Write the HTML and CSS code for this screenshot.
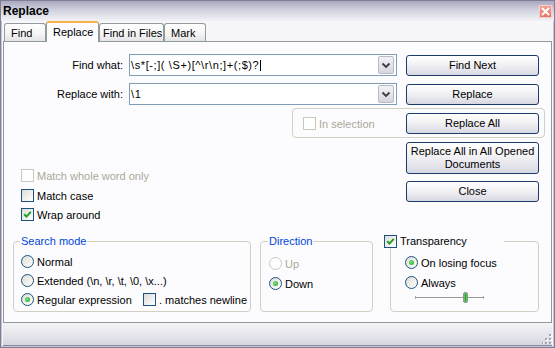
FILE: index.html
```html
<!DOCTYPE html>
<html lang="en">
<head>
    <meta charset="UTF-8">
    <title>Replace</title>
    <link rel="stylesheet" href="styles.css">
</head>
<body>
    <div class="window">
        <div class="titlebar">
            <span class="title">Replace</span>
            <span class="close-btn">
                <svg width="11" height="11" viewBox="0 0 11 11"><path d="M2.5 2.5 L8.5 8.5 M8.5 2.5 L2.5 8.5" stroke="#fff" stroke-width="2" stroke-linecap="round"/></svg>
            </span>
        </div>

        <div class="body">
            <div class="tabs">
                <div class="tab tab-find">Find</div>
                <div class="tab tab-replace active">Replace</div>
                <div class="tab tab-files">Find in Files</div>
                <div class="tab tab-mark">Mark</div>
            </div>

            <div class="panel">
                <div class="row row-find">
                    <span class="field-label">Find what:</span>
                    <div class="combo">
                        <span class="combo-text regex-text">\s*[-;]( \S+)[^\r\n;]+(;$)?<span class="caret"></span></span>
                        <span class="drop"><svg width="14" height="16" viewBox="0 0 14 16"><path d="M3.5 6.5 L7 10 L10.5 6.5" fill="none" stroke="#3c3c3c" stroke-width="1.8"/></svg></span>
                    </div>
                    <button class="btn">Find Next</button>
                </div>

                <div class="row row-replace">
                    <span class="field-label">Replace with:</span>
                    <div class="combo">
                        <span class="combo-text regex-text">\1</span>
                        <span class="drop"><svg width="14" height="16" viewBox="0 0 14 16"><path d="M3.5 6.5 L7 10 L10.5 6.5" fill="none" stroke="#3c3c3c" stroke-width="1.8"/></svg></span>
                    </div>
                    <button class="btn">Replace</button>
                </div>

                <div class="sel-group">
                    <div class="check sel-check">
                        <span class="box disabled"></span>
                        <span class="muted">In selection</span>
                    </div>
                    <button class="btn">Replace All</button>
                </div>

                <div class="row row-lower">
                    <div class="checks">
                        <div class="check">
                            <span class="box disabled"></span>
                            <span class="muted">Match whole word only</span>
                        </div>
                        <div class="check">
                            <span class="box"></span>
                            <span>Match case</span>
                        </div>
                        <div class="check">
                            <span class="box"><svg width="9" height="9" viewBox="0 0 9 9"><path d="M1.2 4.2 L3.5 6.6 L7.8 1.8" fill="none" stroke="#21a121" stroke-width="2"/></svg></span>
                            <span>Wrap around</span>
                        </div>
                    </div>
                    <div class="side-buttons">
                        <button class="btn btn-tall">Replace All in All Opened Documents</button>
                        <button class="btn">Close</button>
                    </div>
                </div>

                <div class="groups">
                    <fieldset class="group search-group">
                        <legend>Search mode</legend>
                        <div class="group-body">
                            <div class="radio">
                                <span class="box round"></span>
                                <span>Normal</span>
                            </div>
                            <div class="radio">
                                <span class="box round"></span>
                                <span>Extended (\n, \r, \t, \0, \x...)</span>
                            </div>
                            <div class="radio-line">
                                <div class="radio regex">
                                    <span class="box round"><span class="dot"></span></span>
                                    <span>Regular expression</span>
                                </div>
                                <div class="check">
                                    <span class="box"></span>
                                    <span>. matches newline</span>
                                </div>
                            </div>
                        </div>
                    </fieldset>

                    <fieldset class="group direction-group">
                        <legend>Direction</legend>
                        <div class="group-body">
                            <div class="radio">
                                <span class="box round disabled"></span>
                                <span class="muted">Up</span>
                            </div>
                            <div class="radio">
                                <span class="box round"><span class="dot"></span></span>
                                <span>Down</span>
                            </div>
                        </div>
                    </fieldset>

                    <fieldset class="group trans-group">
                        <legend>
                            <span class="check">
                                <span class="box"><svg width="9" height="9" viewBox="0 0 9 9"><path d="M1.2 4.2 L3.5 6.6 L7.8 1.8" fill="none" stroke="#21a121" stroke-width="2"/></svg></span>
                                <span>Transparency</span>
                            </span>
                        </legend>
                        <div class="group-body">
                            <div class="radio">
                                <span class="box round"><span class="dot"></span></span>
                                <span>On losing focus</span>
                            </div>
                            <div class="radio">
                                <span class="box round"></span>
                                <span>Always</span>
                            </div>
                            <div class="slider">
                                <svg width="70" height="11" viewBox="0 0 70 11">
                                    <path d="M0.5 4 V7 M68.5 4 V7" stroke="#b4b4b4"/>
                                    <path d="M0 5.5 H69" stroke="#9a9a9a"/>
                                    <path d="M1 6.5 H68" stroke="#ffffff"/>
                                    <rect x="48.5" y="0.5" width="4" height="10" rx="1.5" fill="#5ec45e" stroke="#8a9a92"/>
                                    <path d="M50.5 2 V9" stroke="#2f9e2f"/>
                                </svg>
                            </div>
                        </div>
                    </fieldset>
                </div>
            </div>

            <div class="statusbar">
                <svg class="grip" width="10" height="10" viewBox="0 0 10 10">
                    <g fill="#ffffff">
                        <rect x="8" y="1" width="2" height="2"/><rect x="8" y="5" width="2" height="2"/><rect x="4" y="5" width="2" height="2"/>
                        <rect x="8" y="9" width="2" height="1"/><rect x="4" y="9" width="2" height="1"/><rect x="0" y="9" width="2" height="1"/>
                    </g>
                    <g fill="#a4a4b4">
                        <rect x="7" y="0" width="2" height="2"/><rect x="7" y="4" width="2" height="2"/><rect x="3" y="4" width="2" height="2"/>
                        <rect x="7" y="8" width="2" height="2"/><rect x="3" y="8" width="2" height="2"/><rect x="-1" y="8" width="2" height="2"/>
                    </g>
                </svg>
            </div>
        </div>
    </div>
</body>
</html>
```

FILE: styles.css
```css
body {
    margin: 0;
    font-family: "Liberation Sans", Arial, sans-serif;
    font-size: 11px;
    color: #000;
}

.window {
    width: 555px;
    height: 348px;
    box-sizing: border-box;
    border: 1px solid #7e7e96;
    background: #c4c4d2;
    display: flex;
    flex-direction: column;
}

.titlebar {
    height: 20px;
    flex: none;
    display: flex;
    align-items: center;
    justify-content: space-between;
    padding: 0 2px;
    background: linear-gradient(#a8a8c0, #d2d2de 45%, #f2f2f6);
}

.title {
    font-size: 12px;
    font-weight: bold;
}

.close-btn {
    width: 13px;
    height: 13px;
    box-sizing: border-box;
    border: 1px solid #f6cfc8;
    background: linear-gradient(#f2a096, #e27468);
    display: flex;
    align-items: center;
    justify-content: center;
}

.body {
    flex: 1;
    display: flex;
    flex-direction: column;
    margin: 0 1px 1px;
    padding: 0 1px;
    background: #f7f7fa;
}

/* tabs */
.tabs {
    display: flex;
    align-items: flex-end;
    height: 21px;
    padding-left: 1px;
    margin-bottom: -1px;
}

.tab {
    height: 18px;
    margin-bottom: 1px;
    box-sizing: border-box;
    border: 1px solid #919b9c;
    border-bottom: none;
    border-radius: 3px 3px 0 0;
    background: linear-gradient(#ffffff, #f4f4f4 60%, #e4e4e8);
    padding: 1px 0 0 6px;
    line-height: 16px;
    white-space: nowrap;
    overflow: hidden;
}

.tab-find { width: 42px; }
.tab-replace { width: 53px; }
.tab-files { width: 65px; padding-left: 3px; }
.tab-mark { width: 42px; }

.tab.active {
    height: 21px;
    margin-bottom: 0;
    background: #fcfcfe;
    border-top: 2px solid #f5b347;
    padding-top: 1px;
    position: relative;
    z-index: 1;
}

.panel {
    flex: none;
    height: 282px;
    box-sizing: border-box;
    border: 1px solid #919b9c;
    background: #fcfcfe;
}

/* top rows */
.row {
    display: flex;
    align-items: flex-start;
}

.row-find { margin-top: 12px; }
.row-replace { margin-top: 7px; }

.field-label {
    width: 119px;
    text-align: right;
    line-height: 22px;
}

.combo {
    margin-left: 6px;
    width: 268px;
    height: 22px;
    box-sizing: border-box;
    border: 1px solid #7f9db9;
    background: #fff;
    display: flex;
    align-items: center;
}

.combo-text {
    flex: 1;
    padding-left: 1px;
    white-space: pre;
}

.regex-text {
    letter-spacing: 0.6px;
}

.caret {
    display: inline-block;
    width: 1px;
    height: 11px;
    background: #000;
    vertical-align: -2px;
    margin-left: 1px;
}

.drop {
    width: 16px;
    height: 18px;
    margin-right: 2px;
    box-sizing: border-box;
    border: 1px solid #b9b9cc;
    border-radius: 2px;
    background: linear-gradient(#f2f2f6, #d6d6e2);
    display: flex;
    align-items: center;
    justify-content: center;
}

.btn {
    width: 133px;
    height: 21px;
    margin: 1px 0 0 9px;
    padding: 0;
    box-sizing: border-box;
    border: 1px solid #1c3a6c;
    border-radius: 3px;
    background: linear-gradient(#ffffff, #f2f2f5 45%, #d8d8e3);
    font-family: inherit;
    font-size: 11px;
    color: #000;
    line-height: 13px;
}

/* in selection */
.sel-group {
    margin: 3px 0 0 288px;
    width: 253px;
    height: 30px;
    box-sizing: border-box;
    border: 1px solid #d0d0c4;
    border-radius: 4px;
    display: flex;
    align-items: flex-start;
    padding: 4px 5px 0 10px;
}

.sel-group .btn {
    margin: 0 0 0 auto;
}

.sel-check {
    margin-top: 4px;
}

/* checkboxes and radios */
.check,
.radio {
    display: flex;
    align-items: center;
    gap: 3px;
    height: 13px;
}

.box {
    width: 13px;
    height: 13px;
    box-sizing: border-box;
    border: 1px solid #1c5180;
    background: linear-gradient(135deg, #dcdcd7, #ffffff);
    flex: none;
    display: flex;
    align-items: center;
    justify-content: center;
}

.box.round {
    border-radius: 50%;
}

.box.disabled {
    border-color: #cac8bb;
    background: #fff;
}

.dot {
    width: 5px;
    height: 5px;
    border-radius: 50%;
    background: radial-gradient(circle at 40% 40%, #7ee07e, #1f9e1f);
}

.muted {
    color: #aca899;
}

.row-lower {
    margin-top: 4px;
}

.checks {
    width: 402px;
    box-sizing: border-box;
    padding: 27px 0 0 17px;
}

.checks .check:nth-child(2) { margin-top: 7px; }
.checks .check:nth-child(3) { margin-top: 6px; }

.side-buttons {
    display: flex;
    flex-direction: column;
    gap: 7px;
}

.side-buttons .btn {
    margin: 0;
}

.btn-tall {
    height: 32px;
}

/* group boxes */
.groups {
    display: flex;
    margin-top: 14px;
}

.group {
    margin: 0;
    padding: 0;
    min-inline-size: 0;
    height: 77px;
    box-sizing: border-box;
    border: 1px solid #d0d0c4;
    border-radius: 4px;
}

.group legend {
    padding: 0 1px;
    line-height: 13px;
    color: #0046d5;
}

.search-group {
    margin-left: 9px;
    width: 238px;
}

.search-group legend { margin-left: 6px; }

.search-group .group-body {
    padding: 7px 0 0 7px;
}

.search-group .radio + .radio,
.search-group .radio-line {
    margin-top: 6px;
}

.radio-line {
    display: flex;
}

.radio.regex {
    width: 122px;
}

.direction-group {
    margin-left: 9px;
    width: 113px;
}

.direction-group legend { margin-left: 7px; }

.direction-group .group-body {
    padding: 9px 0 0 8px;
}

.direction-group .radio + .radio {
    margin-top: 7px;
}

.trans-group {
    margin-left: 17px;
    width: 149px;
}

.trans-group legend {
    margin-left: -7px;
    padding: 0;
    width: 120px;
    color: #000;
}

.trans-group .group-body {
    padding: 8px 0 0 14px;
}

.trans-group .radio + .radio {
    margin-top: 7px;
}

.slider {
    margin: 3px 0 0 10px;
    height: 11px;
}

.slider svg {
    display: block;
}

/* status bar */
.statusbar {
    flex: 1;
    background: linear-gradient(#f3f3f7, #e7e7ed 50%, #d6d6e0);
    border-bottom: 1px solid #8a8aa0;
    display: flex;
    justify-content: flex-end;
    align-items: flex-end;
}

.grip {
    display: block;
    margin: 0 0 1px 0;
}
```
